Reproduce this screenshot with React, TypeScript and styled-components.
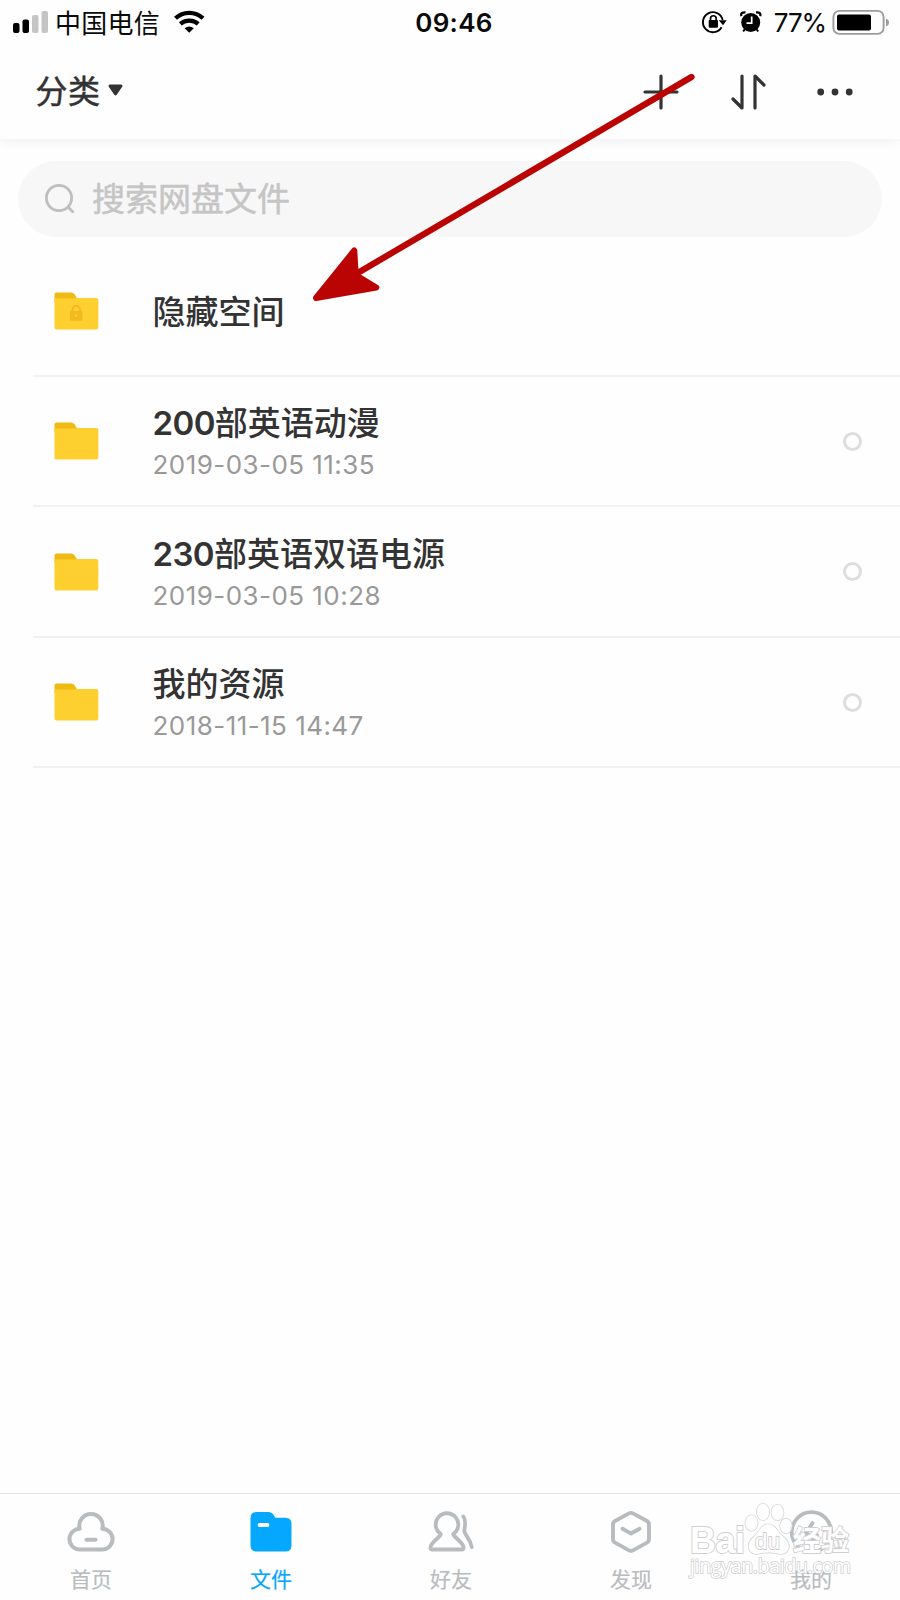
import React from 'react';
import styled, { createGlobalStyle } from 'styled-components';

const sans = `Inter, "Noto Sans CJK SC", sans-serif`;

const GlobalStyle = createGlobalStyle`
  * { box-sizing: border-box; }
  body { margin: 0; background: #fefefe; font-family: ${sans}; color: #333; }
  svg { display: block; flex: none; overflow: visible; }
`;

const Screen = styled.div`
  position: relative;
  display: flex;
  flex-direction: column;
  width: 900px;
  height: 1600px;
  overflow: hidden;
  background: #fefefe;
`;

const StatusBar = styled.div`
  display: grid;
  grid-template-columns: 1fr auto 1fr;
  align-items: center;
  height: 46px;
  padding: 0 11px 2px 13px;
  color: #0a0a0a;
`;

const StatusGroup = styled.div<{ $end?: boolean }>`
  display: flex;
  align-items: center;
  justify-content: ${(p) => (p.$end ? 'flex-end' : 'flex-start')};
`;

const Carrier = styled.span`
  margin: 0 14px 0 6px;
  padding-top: 4px;
  font-size: 26px;
  line-height: 32px;
  letter-spacing: 0.25px;
`;

const Clock = styled.span`
  padding: 2px 0 0 6px;
  font-size: 26px;
  font-weight: 600;
  line-height: 32px;
  letter-spacing: 0.3px;
`;

const BatteryLevel = styled.span`
  margin: 0 6px 0 12px;
  padding-top: 2px;
  font-size: 26px;
  line-height: 32px;
  letter-spacing: -1.1px;
`;

const NavBar = styled.header`
  display: flex;
  align-items: center;
  justify-content: space-between;
  height: 93px;
  padding: 0 47px 2px 35px;
  background: #fefefe;
  box-shadow: 0 2px 12px rgba(0, 0, 0, 0.06);
  clip-path: inset(0 0 -20px 0);
`;

const Category = styled.button`
  display: flex;
  align-items: center;
  gap: 8px;
  padding: 1px 0 0 0.5px;
  border: 0;
  background: none;
  color: #333;
  font: 400 32px/44px ${sans};
  letter-spacing: 0.4px;
  -webkit-text-stroke: 0.5px;
`;

const Actions = styled.div`
  display: flex;
  align-items: center;
`;

const ActionButton = styled.button<{ $gap?: number }>`
  margin: 0 0 0 ${(p) => p.$gap ?? 0}px;
  padding: 0;
  border: 0;
  background: none;
`;

const SearchField = styled.div`
  display: flex;
  align-items: center;
  gap: 17px;
  height: 76px;
  margin: 22px 18px 9px;
  padding: 0 27px 1px;
  border-radius: 38px;
  background: #f7f7f7;
  color: #c5c5c5;
  font-size: 33px;
  line-height: 44px;
  -webkit-text-stroke: 0.5px;
`;

const FileList = styled.main`
  flex: 1;
  padding-left: 33px;
`;

const FileRow = styled.div`
  display: flex;
  align-items: center;
  height: 130.5px;
  padding: 1px 38.5px 0 21px;
  border-bottom: 2px solid #f1f1f1;
`;

const FileInfo = styled.div`
  display: flex;
  flex: 1;
  flex-direction: column;
  gap: 2px;
  margin-left: 53.5px;
  padding-top: 2px;
`;

const FileName = styled.div`
  font-size: 33px;
  font-weight: 500;
  line-height: 44px;
  white-space: nowrap;
`;

const Digits = styled.span`
  font-weight: 600;
  letter-spacing: -0.6px;
`;

const FileDate = styled.div`
  color: #999;
  font-size: 26px;
  line-height: 36px;
  letter-spacing: 0.45px;
`;

const SelectRing = styled.span`
  width: 19px;
  height: 19px;
  border: 3px solid #dedede;
  border-radius: 50%;
`;

const TabBar = styled.nav`
  display: grid;
  grid-template-columns: repeat(5, 180px);
  height: 107px;
  border-top: 1px solid #e4e4e4;
  padding-left: 1px;
`;

const Tab = styled.button<{ $active?: boolean }>`
  display: flex;
  flex-direction: column;
  align-items: center;
  gap: 11px;
  padding: 15px 0 0;
  border: 0;
  background: none;
  color: ${(p) => (p.$active ? '#06a7ff' : '#b9bcbe')};
  font: 400 21px/32px ${sans};
  -webkit-text-stroke: 0.2px;
`;

const PointerLayer = styled.svg`
  position: absolute;
  left: 0;
  top: 0;
  pointer-events: none;
`;

const Watermark = styled.svg`
  position: absolute;
  right: 40px;
  bottom: 10px;
  pointer-events: none;
`;

const SignalIcon = () => (
  <svg width="36" height="24" viewBox="13 10 36 24">
    <rect x="13" y="23" width="6.5" height="10" rx="2" fill="#000" />
    <rect x="22.5" y="19.5" width="6.5" height="13.5" rx="2" fill="#000" />
    <rect x="32" y="15" width="6.5" height="18" rx="2" fill="#c4c4c4" />
    <rect x="41.5" y="11" width="6.5" height="22" rx="2" fill="#c4c4c4" />
  </svg>
);

const WifiIcon = () => (
  <svg width="30" height="24" viewBox="174 10 30 24" fill="none" stroke="#000" strokeWidth="4.2">
    <path d="M175.5 18.3C183 11 195.5 11 203 18.3" />
    <path d="M180.3 23.9C185 19.5 193.5 19.5 198.2 23.9" />
    <path d="M184.6 28.3Q189.2 24.6 193.8 28.3L189.2 32.8Z" fill="#000" stroke="none" />
  </svg>
);

const RotationLockIcon = () => (
  <svg width="25" height="24" viewBox="701 10 25 24">
    <path d="M720.6 27.2A10 10 0 1 1 721.7 20" fill="none" stroke="#000" strokeWidth="1.9" />
    <path d="M717.8 20.3H725.7L722 25.3Z" fill="#000" />
    <rect x="707.7" y="20" width="9.3" height="7.8" rx="1" fill="#000" />
    <path d="M709.5 21V18.6a2.85 2.85 0 0 1 5.7 0V21" fill="none" stroke="#000" strokeWidth="1.7" />
  </svg>
);

const AlarmIcon = () => (
  <svg width="22" height="24" viewBox="740 10 22 24">
    <circle cx="750.7" cy="22.5" r="9.5" fill="#000" />
    <path d="M741.4 16.2Q740 12 745.5 12.3M756 12.3Q761.5 12 760.2 16.2" fill="none" stroke="#000" strokeWidth="2.3" />
    <path d="M751.7 16.5V23.2H746.5" fill="none" stroke="#fff" strokeWidth="1.7" />
    <path d="M744.6 29.5L743.2 31.5M756.8 29.5L758.2 31.5" stroke="#000" strokeWidth="2" />
  </svg>
);

const BatteryIcon = () => (
  <svg width="57" height="25" viewBox="832 9.5 57 25">
    <rect x="833.4" y="10.4" width="50.2" height="23" rx="6" fill="none" stroke="#9c9c9c" strokeWidth="1.9" />
    <rect x="837" y="14" width="34" height="16" rx="2" fill="#000" />
    <path d="M886 18.3Q889 19 889 22T886 25.7Z" fill="#9c9c9c" />
  </svg>
);

const CaretIcon = () => (
  <svg width="15" height="16" viewBox="0 2 15 16">
    <path d="M2 4H13L7.5 11.8Z" fill="#333" stroke="#333" strokeWidth="3" strokeLinejoin="round" />
  </svg>
);

const PlusIcon = () => (
  <svg width="36" height="36" viewBox="0 0 36 36" stroke="#333" strokeWidth="3.2" strokeLinecap="round">
    <path d="M18 2V34M2 18H34" />
  </svg>
);

const SortIcon = () => (
  <svg width="34" height="36" viewBox="0 0 34 36" fill="none" stroke="#333" strokeWidth="3.2" strokeLinecap="round" strokeLinejoin="round">
    <path d="M11 2V34L2 25M24 34V2L33 11" />
  </svg>
);

const MoreIcon = () => (
  <svg width="36" height="8" viewBox="0 0 36 8" fill="#333">
    <circle cx="3.7" cy="4" r="3.4" />
    <circle cx="18" cy="4" r="3.4" />
    <circle cx="32.2" cy="4" r="3.4" />
  </svg>
);

const SearchIcon = () => (
  <svg width="30" height="30" viewBox="0 0 30 30" fill="none" stroke="#bebebe" strokeWidth="2.8" strokeLinecap="round">
    <circle cx="14" cy="14" r="12.6" />
    <path d="M23 23L27.7 27.7" />
  </svg>
);

const FolderIcon = ({ locked }: { locked?: boolean }) => (
  <svg width="45" height="38" viewBox="0 0 45 38">
    <path d="M0.5 10V2.5Q0.5 0.5 2.5 0.5H17Q19.5 0.5 20.8 2.5L24 8Z" fill="#efba12" />
    <path d="M0.5 6.5H19Q21 6.5 22.3 5.9H42Q44.3 5.9 44.3 8V35.5Q44.3 37.5 42.3 37.5H2.5Q0.5 37.5 0.5 35.5Z" fill="#fdd030" />
    {locked && (
      <g>
        <rect x="16" y="19" width="12.5" height="9.7" rx="1" fill="#f2b920" />
        <path d="M18.5 19.5V17.5a3.7 3.7 0 0 1 7.4 0V19.5" fill="none" stroke="#f2b920" strokeWidth="2" />
        <circle cx="22.2" cy="23.5" r="1.3" fill="#fdd030" />
      </g>
    )}
  </svg>
);

const HomeIcon = () => (
  <svg width="48" height="44" viewBox="0 0 48 44" fill="none" stroke="currentColor" strokeWidth="4" strokeLinecap="round" strokeLinejoin="round">
    <path d="M13 40.5A10.4 10.4 0 0 1 12.7 19.7A11.7 11.7 0 1 1 35.3 19.7A10.4 10.4 0 0 1 35 40.5Z" />
    <path d="M19.5 30.7H28.5" />
  </svg>
);

const FilesIcon = () => (
  <svg width="42" height="44" viewBox="0 0 42 44">
    <path d="M0.5 9Q0.5 3 6.5 3H17C21.5 3 23 4.5 25.3 8.7H35.5Q41.5 8.7 41.5 14.7V36.5Q41.5 42.5 35.5 42.5H6.5Q0.5 42.5 0.5 36.5Z" fill="#06a7ff" />
    <path d="M9.7 16H17.3" stroke="#fff" strokeWidth="4.2" strokeLinecap="round" />
  </svg>
);

const FriendsIcon = () => (
  <svg width="46" height="44" viewBox="0 0 46 44" fill="none" stroke="currentColor" strokeWidth="3.8" strokeLinecap="round" strokeLinejoin="round">
    <path d="M12.8 25A11.3 11.3 0 1 1 25.2 25C27 30 34.5 32 35.6 38.5Q36 40.5 33.5 40.5H4.5Q2 40.5 2.4 38.5C3.5 32 11 30 12.8 25Z" />
    <path d="M35.3 7.5C39 11.5 36.5 17 36.3 22.5C37.5 27 42.5 30 43.7 38" />
  </svg>
);

const DiscoverIcon = () => (
  <svg width="42" height="44" viewBox="0 0 42 44" fill="none" stroke="currentColor" strokeWidth="3.9" strokeLinecap="round" strokeLinejoin="round">
    <path d="M19 4.4Q21 3.3 23 4.4L37 12Q39 13.1 39 15.5V30Q39 32.5 37 33.6L23 41.4Q21 42.5 19 41.4L5 33.6Q3 32.5 3 30V15.5Q3 13.1 5 12Z" />
    <path d="M12.5 19.7L21 24.5L29.5 19.7" />
  </svg>
);

const MineIcon = () => (
  <svg width="44" height="44" viewBox="0 0 44 44" fill="none" stroke="currentColor" strokeWidth="3.8" strokeLinecap="round" strokeLinejoin="round">
    <circle cx="22.5" cy="23" r="19.8" />
    <path d="M23.5 14L16 26H28L21 35" />
  </svg>
);

const files = [
  { digits: '', name: '隐藏空间', date: '', locked: true },
  { digits: '200', name: '部英语动漫', date: '2019-03-05 11:35' },
  { digits: '230', name: '部英语双语电源', date: '2019-03-05 10:28' },
  { digits: '', name: '我的资源', date: '2018-11-15 14:47' },
];

const tabs = [
  { label: '首页', Icon: HomeIcon },
  { label: '文件', Icon: FilesIcon, active: true },
  { label: '好友', Icon: FriendsIcon },
  { label: '发现', Icon: DiscoverIcon },
  { label: '我的', Icon: MineIcon },
];

export default function App() {
  return (
    <>
      <GlobalStyle />
      <Screen>
        <StatusBar>
          <StatusGroup>
            <SignalIcon />
            <Carrier>中国电信</Carrier>
            <WifiIcon />
          </StatusGroup>
          <Clock>09:46</Clock>
          <StatusGroup $end>
            <RotationLockIcon />
            <ActionButton as="span" $gap={13}><AlarmIcon /></ActionButton>
            <BatteryLevel>77%</BatteryLevel>
            <BatteryIcon />
          </StatusGroup>
        </StatusBar>
        <NavBar>
          <Category>分类<CaretIcon /></Category>
          <Actions>
            <ActionButton><PlusIcon /></ActionButton>
            <ActionButton $gap={52}><SortIcon /></ActionButton>
            <ActionButton $gap={52}><MoreIcon /></ActionButton>
          </Actions>
        </NavBar>
        <SearchField><SearchIcon />搜索网盘文件</SearchField>
        <FileList>
          {files.map((f) => (
            <FileRow key={f.name}>
              <FolderIcon locked={f.locked} />
              <FileInfo>
                <FileName>{f.digits && <Digits>{f.digits}</Digits>}{f.name}</FileName>
                {f.date && <FileDate>{f.date}</FileDate>}
              </FileInfo>
              {f.date && <SelectRing />}
            </FileRow>
          ))}
        </FileList>
        <TabBar>
          {tabs.map(({ label, Icon, active }) => (
            <Tab key={label} $active={active}><Icon />{label}</Tab>
          ))}
        </TabBar>
        <Watermark width="170" height="90" viewBox="690 1500 170 90" fill="#fff" stroke="#cfcfd2" strokeWidth="1.8" paintOrder="stroke">
          <text x="690" y="1553" fontFamily="Liberation Sans" fontWeight="700" fontSize="36" textLength="55">Bai</text>
          <g fillOpacity="0.7" strokeWidth="1.1">
            <ellipse cx="751.5" cy="1523" rx="6.3" ry="8" />
            <ellipse cx="763" cy="1512" rx="6.3" ry="8.5" />
            <ellipse cx="777.5" cy="1512.5" rx="6.3" ry="8" />
            <ellipse cx="786" cy="1526" rx="6" ry="7.5" />
            <path d="M768 1524C776 1524 777 1532 784 1537C793 1545 789 1555 779 1554C771 1552 766 1552 758 1554C748 1555 745 1545 753 1537C760 1531 761 1524 768 1524Z" />
          </g>
          <text x="755" y="1549" fontFamily="Liberation Sans" fontSize="22" textLength="25">du</text>
          <text x="793" y="1551" fontFamily="Noto Sans CJK SC" fontWeight="700" fontSize="28">经验</text>
          <text x="690" y="1573" fontFamily="Open Sans" fontSize="19.5" textLength="161" strokeWidth="1.5">jingyan.baidu.com</text>
        </Watermark>
        <PointerLayer width="900" height="320" viewBox="0 0 900 320">
          <path d="M691.5 77L350 277.500" stroke="#ba0404" strokeWidth="6.3" strokeLinecap="round" />
          <path d="M316 298L354.300 250.500L355.700 275L376.300 287.500Z" fill="#ba0404" stroke="#ba0404" strokeWidth="6" strokeLinejoin="round" />
        </PointerLayer>
      </Screen>
    </>
  );
}
